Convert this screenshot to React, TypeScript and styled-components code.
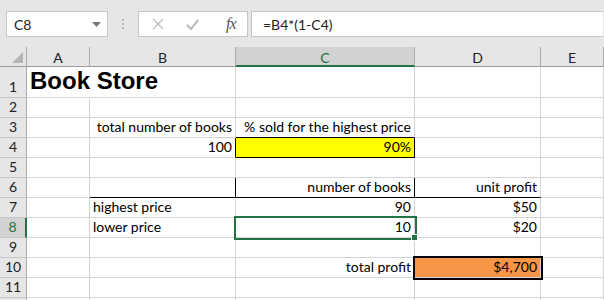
import styled, { createGlobalStyle, css } from "styled-components";

const GRID = "#d4d4d4";
const GREEN = "#217346";
const HEAD_BG = "#e6e6e6";

type CellDef = {
  text?: string;
  align?: "left" | "right";
  fill?: string;
  right?: string;
  bottom?: string;
  title?: boolean;
  selected?: boolean;
  thick?: boolean;
};

const COLUMNS = ["A", "B", "C", "D", "E"];
const ROWS = [1, 2, 3, 4, 5, 6, 7, 8, 9, 10, 11, 12];

const cells: Record<string, CellDef> = {
  A1: { text: "Book Store", title: true, right: "transparent" },
  B3: { text: "total number of books", align: "right" },
  C3: { text: "% sold for the highest price", align: "right", bottom: "#000" },
  B4: { text: "100", align: "right", right: "#000" },
  C4: { text: "90%", align: "right", fill: "#ffff00", right: "#000", bottom: "#000" },
  B6: { right: "#000", bottom: "#000" },
  C6: { text: "number of books", align: "right", right: "#000", bottom: "#000" },
  D6: { text: "unit profit", align: "right", bottom: "#000" },
  B7: { text: "highest price" },
  C7: { text: "90", align: "right" },
  D7: { text: "$50", align: "right" },
  B8: { text: "lower price" },
  C8: { text: "10", align: "right", selected: true },
  D8: { text: "$20", align: "right" },
  C10: { text: "total profit", align: "right" },
  D10: { text: "$4,700", align: "right", fill: "#f79646", thick: true },
};

const GlobalStyle = createGlobalStyle`
  html, body {
    margin: 0;
    padding: 0;
    background: #fff;
  }
  body {
    font-family: Lato, "Liberation Sans", sans-serif;
  }
`;

const Page = styled.div`
  width: 604px;
  height: 300px;
  overflow: hidden;
  background: #fff;
`;

const Toolbar = styled.div`
  height: 47px;
  box-sizing: border-box;
  padding: 11px 1px 0 6px;
  display: flex;
  align-items: flex-start;
  background: ${HEAD_BG};
`;

const NameBox = styled.div`
  width: 102px;
  height: 26px;
  box-sizing: border-box;
  border: 1px solid #c6c6c6;
  background: #fff;
  display: flex;
  align-items: center;
  justify-content: space-between;
  padding: 0 6px 0 7px;
  font-size: 14px;
  color: #222;
`;

const Grip = styled.div`
  width: 30px;
  height: 26px;
  display: flex;
  flex-direction: column;
  align-items: center;
  justify-content: center;
  gap: 2px;

  span {
    width: 2px;
    height: 2px;
    background: #b8b8b8;
  }
`;

const FxButtons = styled.div`
  width: 110px;
  height: 26px;
  box-sizing: border-box;
  border: 1px solid #c6c6c6;
  background: #fff;
  display: flex;
  align-items: center;
  padding: 0 0 0 13px;
  gap: 22px;
`;

const FxLabel = styled.span`
  font-family: "Liberation Serif", serif;
  font-style: italic;
  font-size: 16px;
  color: #555;
  margin-left: 5px;
  letter-spacing: -1px;
`;

const FormulaInput = styled.div`
  flex: 1;
  height: 26px;
  margin-left: 3px;
  box-sizing: border-box;
  border: 1px solid #c6c6c6;
  border-right: none;
  background: #fff;
  display: flex;
  align-items: center;
  padding-left: 11px;
  font-size: 14px;
  color: #222;
`;

const Sheet = styled.div`
  display: grid;
  grid-template-columns: 27px 63px 146px 179px 126px 63px;
  grid-template-rows: 20px 31px repeat(11, 20px);
`;

const Corner = styled.div`
  box-sizing: border-box;
  background: ${HEAD_BG};
  border-right: 1px solid #ababab;
  border-bottom: 1px solid #9b9b9b;
  display: flex;
  align-items: flex-end;
  justify-content: flex-end;
  padding: 0 3px 3px 0;
`;

const ColHead = styled.div<{ $active?: boolean }>`
  box-sizing: border-box;
  display: flex;
  align-items: center;
  justify-content: center;
  background: ${HEAD_BG};
  border-right: 1px solid #ababab;
  border-bottom: 1px solid #9b9b9b;
  font-size: 14px;
  color: #222;
  padding-top: 2px;
  ${(p) =>
    p.$active &&
    css`
      background: #d2d2d2;
      border-bottom: 2px solid ${GREEN};
      color: ${GREEN};
    `}
`;

const RowHead = styled.div<{ $active?: boolean }>`
  box-sizing: border-box;
  display: flex;
  align-items: flex-end;
  justify-content: center;
  padding-bottom: 1px;
  background: ${HEAD_BG};
  border-right: 1px solid #ababab;
  border-bottom: 1px solid #c6c6c6;
  font-size: 14px;
  line-height: 18px;
  color: #222;
  ${(p) =>
    p.$active &&
    css`
      background: #d2d2d2;
      border-right: 2px solid ${GREEN};
      color: ${GREEN};
    `}
`;

const Cell = styled.div<{
  $align?: "left" | "right";
  $fill?: string;
  $right?: string;
  $bottom?: string;
  $title?: boolean;
  $selected?: boolean;
  $thick?: boolean;
}>`
  position: relative;
  box-sizing: border-box;
  display: flex;
  align-items: flex-end;
  justify-content: ${(p) => (p.$align === "right" ? "flex-end" : "flex-start")};
  padding: 0 3px 1px 3px;
  border-right: 1px solid ${(p) => p.$right ?? GRID};
  border-bottom: 1px solid ${(p) => p.$bottom ?? GRID};
  background: ${(p) => p.$fill ?? "transparent"};
  white-space: nowrap;
  font-size: 14px;
  line-height: 18px;
  color: #000;
  ${(p) =>
    p.$title &&
    css`
      font-family: "Liberation Sans", Arial, sans-serif;
      font-weight: bold;
      font-size: 24px;
      line-height: 28px;
      padding-bottom: 2px;
    `}
  ${(p) =>
    p.$selected &&
    css`
      outline: 2px solid ${GREEN};
      z-index: 2;
    `}
  ${(p) =>
    p.$thick &&
    css`
      outline: 2px solid #000;
      z-index: 2;
    `}
`;

const FillHandle = styled.span`
  position: absolute;
  right: -4px;
  bottom: -4px;
  width: 5px;
  height: 5px;
  background: ${GREEN};
  border: 1px solid #fff;
`;

const App = () => {
  return (
    <Page>
      <GlobalStyle />
      <Toolbar>
        <NameBox>
          C8
          <svg width="9" height="5" viewBox="0 0 9 5">
            <path d="M0 0h9L4.5 5z" fill="#777" />
          </svg>
        </NameBox>
        <Grip>
          <span />
          <span />
          <span />
        </Grip>
        <FxButtons>
          <svg width="12" height="12" viewBox="0 0 12 12">
            <path d="M1 1l10 10M11 1L1 11" stroke="#bdbdbd" strokeWidth="1.3" />
          </svg>
          <svg width="13" height="11" viewBox="0 0 13 11">
            <path d="M1 6l4 4 7-9" stroke="#bdbdbd" strokeWidth="2.2" fill="none" />
          </svg>
          <FxLabel>fx</FxLabel>
        </FxButtons>
        <FormulaInput>=B4*(1-C4)</FormulaInput>
      </Toolbar>
      <Sheet>
        <Corner>
          <svg width="11" height="11" viewBox="0 0 11 11">
            <path d="M11 0v11H0z" fill="#b4b4b4" />
          </svg>
        </Corner>
        {COLUMNS.map((c) => (
          <ColHead key={c} $active={c === "C"}>
            {c}
          </ColHead>
        ))}
        {ROWS.map((r) => [
          <RowHead key={`h${r}`} $active={r === 8}>
            {r < 12 ? r : null}
          </RowHead>,
          ...COLUMNS.map((c) => {
            const d = cells[`${c}${r}`] ?? {};
            return (
              <Cell
                key={`${c}${r}`}
                $align={d.align}
                $fill={d.fill}
                $right={d.right}
                $bottom={d.bottom}
                $title={d.title}
                $selected={d.selected}
                $thick={d.thick}
              >
                {d.text}
                {d.selected && <FillHandle />}
              </Cell>
            );
          }),
        ])}
      </Sheet>
    </Page>
  );
};

export default App;
